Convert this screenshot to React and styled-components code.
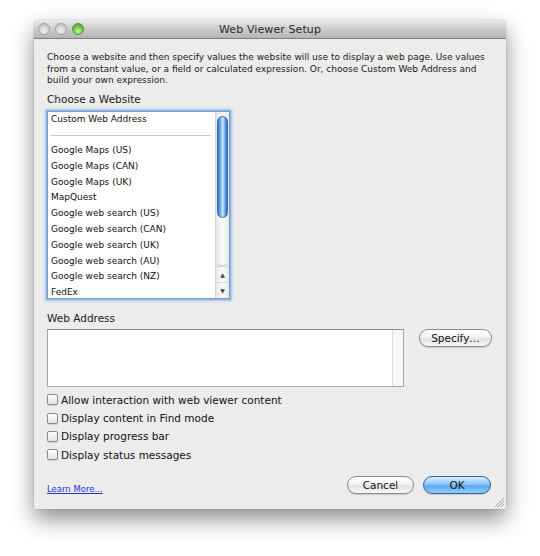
import React from 'react';
import styled, { createGlobalStyle } from 'styled-components';

const Global = createGlobalStyle`
  html, body { margin: 0; padding: 0; background: #fff; }
  body { font-family: "DejaVu Sans", "Liberation Sans", sans-serif; color: #1a1a1a; }
`;

const sites = [
  'Google Maps (US)',
  'Google Maps (CAN)',
  'Google Maps (UK)',
  'MapQuest',
  'Google web search (US)',
  'Google web search (CAN)',
  'Google web search (UK)',
  'Google web search (AU)',
  'Google web search (NZ)',
  'FedEx',
];

const options = [
  'Allow interaction with web viewer content',
  'Display content in Find mode',
  'Display progress bar',
  'Display status messages',
];

function App() {
  return (
    <>
      <Global />
      <Page>
        <Window>
          <TitleBar>
            <Lights>
              <Light />
              <Light />
              <Light $green />
            </Lights>
            <Title>Web Viewer Setup</Title>
          </TitleBar>
          <Body>
            <Description>
              Choose a website and then specify values the website will use to display a web page. Use values
              from a constant value, or a field or calculated expression. Or, choose Custom Web Address and
              build your own expression.
            </Description>
            <Label>Choose a Website</Label>
            <ListBox>
              <Items>
                <Item>Custom Web Address</Item>
                <Separator />
                {sites.map((s) => (
                  <Item key={s}>{s}</Item>
                ))}
              </Items>
              <ScrollBar>
                <Track>
                  <Thumb />
                </Track>
                <Arrow>▲</Arrow>
                <Arrow>▼</Arrow>
              </ScrollBar>
            </ListBox>
            <Label $gap={13}>Web Address</Label>
            <AddressRow>
              <TextArea>
                <TextScroll />
              </TextArea>
              <Pill>Specify…</Pill>
            </AddressRow>
            <Checks>
              {options.map((o) => (
                <CheckRow key={o}>
                  <Box />
                  {o}
                </CheckRow>
              ))}
            </Checks>
            <Footer>
              <LearnMore href="#">Learn More...</LearnMore>
              <Buttons>
                <Pill $w={67}>Cancel</Pill>
                <Pill $w={68} $primary>OK</Pill>
              </Buttons>
            </Footer>
            <Grip>
              <svg width="10" height="10" viewBox="0 0 10 10">
                <path d="M1 10 L10 1 M4 10 L10 4 M7 10 L10 7" stroke="#9a9a9a" strokeWidth="0.9" fill="none" />
              </svg>
            </Grip>
          </Body>
        </Window>
      </Page>
    </>
  );
}

const Page = styled.div`
  width: 540px;
  height: 556px;
  padding: 20px 0 0 34px;
  box-sizing: border-box;
`;

const Window = styled.div`
  width: 472px;
  height: 489px;
  background: #ececec;
  display: flex;
  flex-direction: column;
  box-shadow: 0 10px 22px rgba(0, 0, 0, 0.45), 0 0 1px rgba(0, 0, 0, 0.5);
  border-radius: 4px 4px 0 0;
`;

const TitleBar = styled.div`
  height: 18px;
  position: relative;
  display: flex;
  align-items: center;
  justify-content: center;
  background: linear-gradient(#e9e9e9, #c6c6c6 60%, #b5b5b5);
  border-bottom: 1px solid #7f7f7f;
  border-radius: 4px 4px 0 0;
`;

const Lights = styled.div`
  position: absolute;
  left: 4px;
  top: 3px;
  display: flex;
  gap: 5px;
`;

const Light = styled.div`
  width: 12px;
  height: 12px;
  border-radius: 50%;
  box-sizing: border-box;
  border: 1px solid ${(p) => (p.$green ? '#4f9a32' : '#a3a3a3')};
  background: ${(p) =>
    p.$green
      ? 'radial-gradient(circle at 50% 70%, #c6f59a, #6cc23e 55%, #3d8d22)'
      : 'radial-gradient(circle at 50% 70%, #f0f0f0, #cfcfcf 60%, #b3b3b3)'};
`;

const Title = styled.div`
  font-size: 11px;
  color: #2a2a2a;
  letter-spacing: 0.1px;
`;

const Body = styled.div`
  flex: 1;
  position: relative;
  padding: 13px 13px 0 13px;
  display: flex;
  flex-direction: column;
`;

const Description = styled.p`
  margin: 0;
  font-size: 9px;
  line-height: 11.5px;
  color: #1a1a1a;
`;

const Label = styled.div`
  margin-top: ${(p) => p.$gap || 6}px;
  font-size: 10.5px;
  line-height: 13px;
  color: #1a1a1a;
`;

const ListBox = styled.div`
  margin-top: 5px;
  width: 181px;
  height: 186px;
  background: #fff;
  border: 1px solid #7a9ec4;
  box-shadow: 0 0 0 1px #8cb8e8, 0 0 2px 2px rgba(105, 160, 225, 0.55);
  display: flex;
  overflow: hidden;
`;

const Items = styled.div`
  flex: 1;
  padding: 0 0 0 3px;
`;

const Item = styled.div`
  font-size: 9px;
  height: 15.8px;
  line-height: 15.8px;
  white-space: nowrap;
  color: #111;
`;

const Separator = styled.div`
  height: 15.8px;
  margin-right: 4px;
  display: flex;
  align-items: center;
  &::after {
    content: '';
    flex: 1;
    height: 1px;
    background: #c8c8c8;
  }
`;

const ScrollBar = styled.div`
  width: 13px;
  border-left: 1px solid #d5d5d5;
  background: linear-gradient(90deg, #e6e6e6, #fbfbfb 50%, #e6e6e6);
  display: flex;
  flex-direction: column;
`;

const Track = styled.div`
  flex: 1;
  padding: 4px 1px 0 1px;
  border-bottom: 1px solid #cfcfcf;
  border-radius: 0 0 6px 6px;
`;

const Thumb = styled.div`
  height: 100px;
  border-radius: 6px;
  border: 1px solid #3c6fb4;
  background: linear-gradient(90deg, #2f6fd0, #8ec2f5 35%, #cfe6fd 55%, #5f9fe6 80%, #2b63c2);
`;

const Arrow = styled.div`
  height: 15px;
  font-size: 6px;
  color: #444;
  display: flex;
  align-items: center;
  justify-content: center;
  border-top: 1px solid #dadada;
`;

const AddressRow = styled.div`
  margin-top: 4px;
  display: flex;
  align-items: flex-start;
`;

const TextArea = styled.div`
  width: 355px;
  height: 56px;
  background: #fff;
  border: 1px solid #a5a5a5;
  border-top-color: #8c8c8c;
  display: flex;
  justify-content: flex-end;
`;

const TextScroll = styled.div`
  width: 10px;
  border-left: 1px solid #dcdcdc;
  background: #f7f7f7;
`;

const Pill = styled.button`
  margin-left: ${(p) => (p.$w ? 0 : 15)}px;
  width: ${(p) => p.$w || 73}px;
  height: 18px;
  padding: 0;
  border-radius: 9px;
  font-family: inherit;
  font-size: 10.5px;
  color: #111;
  border: 1px solid ${(p) => (p.$primary ? '#3a5f97' : '#8a8a8a')};
  background: ${(p) =>
    p.$primary
      ? 'linear-gradient(#d4ecff, #8fc6f6 45%, #5ba7ef 55%, #8dd0fb)'
      : 'linear-gradient(#ffffff, #f4f4f4 45%, #e2e2e2 55%, #f8f8f8)'};
  box-shadow: 0 1px 1px rgba(0, 0, 0, 0.15);
`;

const Checks = styled.div`
  margin-top: 7px;
  display: flex;
  flex-direction: column;
  gap: 6px;
`;

const CheckRow = styled.label`
  display: flex;
  align-items: center;
  gap: 3px;
  height: 12.4px;
  font-size: 10.5px;
  color: #111;
`;

const Box = styled.span`
  width: 11px;
  height: 11px;
  box-sizing: border-box;
  border: 1px solid #8a8a8a;
  border-radius: 2px;
  background: linear-gradient(#ffffff, #f0f0f0 50%, #e4e4e4);
  box-shadow: 0 1px 1px rgba(0, 0, 0, 0.12);
`;

const Footer = styled.div`
  margin-top: 15px;
  display: flex;
  align-items: flex-start;
  justify-content: space-between;
  padding-right: 2px;
`;

const LearnMore = styled.a`
  margin-top: 8px;
  font-size: 8.5px;
  color: #2233dd;
  text-decoration: underline;
`;

const Buttons = styled.div`
  display: flex;
  gap: 9px;
`;

const Grip = styled.div`
  position: absolute;
  right: 2px;
  bottom: 2px;
  width: 10px;
  height: 10px;
  line-height: 0;
`;

export default App;
